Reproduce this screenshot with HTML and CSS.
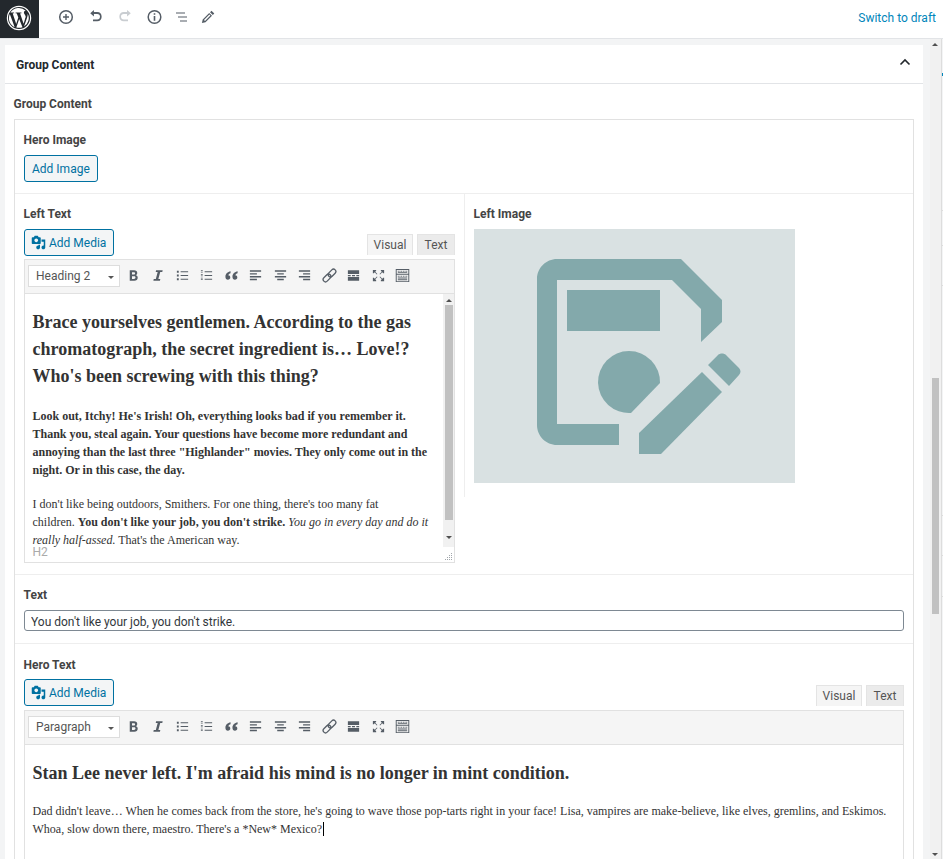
FILE: index.html
```html
<!DOCTYPE html>
<html lang="en">
  <head>
    <meta charset="UTF-8" />
    <meta name="viewport" content="width=device-width, initial-scale=1.0" />
    <title>Edit Page</title>
    <link rel="stylesheet" href="styles.css">
  </head>
  <body>
    <svg class="icon-defs" width="0" height="0">
      <defs>
        <symbol id="media" viewBox="0 0 20 20">
          <path d="M13 11V4c0-.55-.45-1-1-1h-1.670L9 1H5L3.670 3H2c-.55 0-1 .45-1 1v7c0 .55.45 1 1 1h10c.55 0 1-.45 1-1zM7 4.500c1.380 0 2.500 1.120 2.500 2.500S8.380 9.500 7 9.500 4.500 8.380 4.500 7 5.620 4.500 7 4.500zM14 6h5v10.500c0 1.380-1.120 2.500-2.500 2.500S14 17.880 14 16.500s1.120-2.500 2.500-2.500c.17 0 .34.020.5.050V9h-3V6zm-4 8.050V13h2v3.500c0 1.380-1.120 2.500-2.500 2.500S7 17.880 7 16.500 8.120 14 9.500 14c.17 0 .34.020.5.050z" fill="currentColor"/>
        </symbol>
        <symbol id="bold" viewBox="0 0 16 16"><path d="M4 2.500h4.600c2.200 0 3.400 1 3.400 2.800 0 1.100-.6 2-1.600 2.400 1.300.3 2.100 1.300 2.100 2.600 0 2-1.400 3.200-3.700 3.200H4zM6.400 4.400v2.600h1.800c1 0 1.500-.5 1.500-1.300s-.5-1.300-1.500-1.300zm0 4.400v2.800h2.100c1 0 1.600-.5 1.600-1.400s-.6-1.400-1.600-1.400z" fill="currentColor"/></symbol>
        <symbol id="italic" viewBox="0 0 16 16"><path d="M6.500 2.500h7l-.4 1.800h-2.200l-2 7.400H11l-.4 1.800h-7l.4-1.800h2.200l2-7.400H6.100z" fill="currentColor"/></symbol>
        <symbol id="ul" viewBox="0 0 16 16"><path d="M2 3h2v2H2zm0 4h2v2H2zm0 4h2v2H2zM6 3.500h8v1H6zm0 4h8v1H6zm0 4h8v1H6z" fill="currentColor"/></symbol>
        <symbol id="ol" viewBox="0 0 16 16"><path d="M2 2.500h2v.8H2zm0 1.500h2v.8H2zM2 6.500h2v.8H2zm0 1.500h2v.8H2zM2 10.500h2v.8H2zm0 1.500h2v.8H2zM6 3.500h8v1H6zm0 4h8v1H6zm0 4h8v1H6z" fill="currentColor"/></symbol>
        <symbol id="quote" viewBox="0 0 16 16"><path d="M7 3.500C4 4.300 1.500 6 1.500 9.300 1.500 11.200 2.600 12.500 4.200 12.500c1.400 0 2.500-1 2.500-2.400S5.700 7.800 4.500 7.800c.3-1 1.300-1.900 2.500-2.300zm7.500 0C11.500 4.300 9 6 9 9.300c0 1.900 1.100 3.200 2.700 3.200 1.400 0 2.500-1 2.500-2.400s-1-2.300-2.200-2.300c.3-1 1.300-1.900 2.500-2.300z" fill="currentColor"/></symbol>
        <symbol id="left" viewBox="0 0 16 16"><path d="M2 2.500h12v1.500H2zm0 3h7.500V7H2zm0 3h12V10H2zm0 3h7.500V13H2z" fill="currentColor"/></symbol>
        <symbol id="center" viewBox="0 0 16 16"><path d="M2 2.500h12v1.500H2zm2.500 3h7V7h-7zM2 8.500h12V10H2zm2.500 3h7V13h-7z" fill="currentColor"/></symbol>
        <symbol id="right" viewBox="0 0 16 16"><path d="M2 2.500h12v1.500H2zm4.500 3H14V7H6.500zM2 8.500h12V10H2zm4.500 3H14V13H6.500z" fill="currentColor"/></symbol>
        <symbol id="link" viewBox="0 0 16 16"><g transform="rotate(-45 8 8)" fill="none" stroke="currentColor" stroke-width="1.400"><rect x="-.5" y="5.500" width="9.500" height="5" rx="2.500"/><rect x="7" y="5.500" width="9.500" height="5" rx="2.500"/></g></symbol>
        <symbol id="more" viewBox="0 0 16 16"><path d="M2 2.500h12V6.500H2zM2 7.500h3v1.200H2zm4.400 0h3.200v1.200H6.400zm4.600 0h3v1.200h-3zM2 9.700h12v3.800H2z" fill="currentColor"/></symbol>
        <symbol id="full" viewBox="0 0 16 16"><path d="M2 2h3.500v1L4.500 4l2.300 2.300-.6.6L4 4.500l-1 1H2zm12 0v3.500h-1l-1-1-2.300 2.400-.6-.6L11.500 4l-1-1V2zM2 14v-3.500h1l1 1 2.300-2.400.6.6L4.500 12l1 1v1zm12 0h-3.500v-1l1-1-2.400-2.300.6-.6L12 11.500l1-1h1z" fill="currentColor"/></symbol>
        <symbol id="kitchen" viewBox="0 0 16 16"><path fill-rule="evenodd" d="M.8 1h14.400v14H.8zM1.800 2v4.200h12.400V2zm0 5.200V14h12.400V7.200zM3 3h1v1H3zm1.800 0h1v1h-1zm1.800 0h1v1h-1zm1.800 0h1v1h-1zm1.800 0h1v1h-1zm1.800 0h1v1h-1zM3 4.500h10v.8H3zM3 8.300h1v1H3zm1.800 0h1v1h-1zm1.800 0h1v1h-1zm1.800 0h1v1h-1zm1.800 0h1v1h-1zm1.800 0h1v1h-1zM3 10.200h10v1H3zM3 12h10v1H3z" fill="currentColor"/></symbol>
      </defs>
    </svg>

    <header class="topbar">
      <a class="wp-logo">
        <svg width="26" height="26" viewBox="0 0 26 26">
          <circle cx="13" cy="13" r="11.600" fill="none" stroke="#fff" stroke-width="1.200"/>
          <path d="M2.900 13c0 4 2.300 7.500 5.700 9.100L3.800 8.900A10 10 0 0 0 2.900 13zM19.800 12.500c0-1.300-.5-2.100-.9-2.800-.5-.8-1-1.500-1-2.300 0-.9.700-1.700 1.700-1.700h.1A10.100 10.100 0 0 0 4.400 7.600h.7c1.100 0 2.700-.1 2.700-.1.500 0 .6.800 0 .8 0 0-.5.100-1.100.1l3.500 10.500 2.100-6.300-1.500-4.200c-.5 0-1-.1-1-.1-.5 0-.5-.8.100-.8 0 0 1.600.1 2.600.1 1.100 0 2.700-.1 2.700-.1.500 0 .6.800 0 .8 0 0-.5.100-1.100.1l3.500 10.400 1-3.200c.4-1.300.7-2.200.7-3zM13.200 13.900l-2.900 8.500a10 10 0 0 0 6.200-.2l-.1-.1zM21.600 8.400c0 .3.100.7.100 1.100 0 1-.2 2.100-.7 3.500l-3 8.600A10.100 10.100 0 0 0 21.600 8.400z" fill="#fff"/>
        </svg>
      </a>
      <div class="tools">
        <svg class="tool" viewBox="0 0 20 20"><circle cx="10" cy="10" r="6.300" fill="none" stroke="#555d66" stroke-width="1.500"/><path d="M7 9.300h2.300V7h1.400v2.300H13v1.400h-2.300V13H9.300v-2.300H7z" fill="#555d66"/></svg>
        <svg class="tool" viewBox="0 0 20 20"><path d="M8 5.200V3L4 6.500 8 10V7.400h3.500c2 0 3 1.200 3 2.800s-1 3-3 3H7v1.800h4.500c3 0 4.800-2 4.800-4.800s-1.800-5-4.800-5z" fill="#555d66" transform="translate(1.500 .2) scale(.93)"/></svg>
        <svg class="tool" viewBox="0 0 20 20"><path d="M12 5.200V3l4 3.500-4 3.500V7.400H8.500c-2 0-3 1.200-3 2.800s1 3 3 3H13v1.800H8.500c-3 0-4.800-2-4.800-4.800s1.800-5 4.800-5z" fill="#c9cdd1" transform="translate(1.900 .2) scale(.93)"/></svg>
        <svg class="tool" viewBox="0 0 20 20"><g transform="translate(1.500 0)"><circle cx="10" cy="10" r="6.300" fill="none" stroke="#555d66" stroke-width="1.500"/><path d="M9.200 6.300h1.600v1.500H9.200zm0 2.800h1.600v4.600H9.200z" fill="#555d66"/></g></svg>
        <svg class="tool" viewBox="0 0 20 20"><path d="M4 5.400h9v1.200H4zm2 4h9v1.200H6zM8 13.400h7v1.200H8z" fill="#555d66"/></svg>
        <svg class="tool last" viewBox="0 0 20 20"><path d="M13.500 3.700l2.800 2.800-1.500 1.500L12 5.200zM11.200 6l2.800 2.800-6.500 6.500-3.600.8.800-3.600zM6 13l1 1 5.400-5.400-1-1z" fill="#555d66" fill-rule="evenodd"/></svg>
      </div>
      <a class="switch-draft">Switch to draft</a>
    </header>

    <div class="layout">
      <main class="content">
        <section class="metabox">
          <div class="metabox-head">
            <h2>Group Content</h2>
            <svg class="chevron" width="14" height="14" viewBox="0 0 14 14"><path d="M2.500 9.500L7 5l4.500 4.500" fill="none" stroke="#23282d" stroke-width="1.600"/></svg>
          </div>
          <div class="metabox-body">
            <div class="group-label">Group Content</div>
            <div class="group">
              <div class="field hero-image">
                <label>Hero Image</label>
                <button class="btn">Add Image</button>
              </div>

              <div class="split">
                <div class="field left-text">
                  <label>Left Text</label>
                  <div class="editor-top">
                    <button class="btn"><svg class="btn-icon"><use href="#media"/></svg>Add Media</button>
                    <div class="tabs"><span class="tab visual">Visual</span><span class="tab">Text</span></div>
                  </div>
                  <div class="editor">
                    <div class="toolbar">
                      <div class="format">Heading 2<i class="caret"></i></div>
                      <svg class="tb"><use href="#bold"/></svg>
                      <svg class="tb"><use href="#italic"/></svg>
                      <svg class="tb"><use href="#ul"/></svg>
                      <svg class="tb"><use href="#ol"/></svg>
                      <svg class="tb"><use href="#quote"/></svg>
                      <svg class="tb"><use href="#left"/></svg>
                      <svg class="tb"><use href="#center"/></svg>
                      <svg class="tb"><use href="#right"/></svg>
                      <svg class="tb"><use href="#link"/></svg>
                      <svg class="tb"><use href="#more"/></svg>
                      <svg class="tb"><use href="#full"/></svg>
                      <svg class="tb"><use href="#kitchen"/></svg>
                    </div>
                    <div class="editor-body short">
                      <h2>Brace yourselves gentlemen. According to the gas chromatograph, the secret ingredient is… Love!? Who's been screwing with this thing?</h2>
                      <p><strong>Look out, Itchy! He's Irish! Oh, everything looks bad if you remember it. Thank you, steal again. Your questions have become more redundant and annoying than the last three "Highlander" movies. They only come out in the night. Or in this case, the day.</strong></p>
                      <p>I don't like being outdoors, Smithers. For one thing, there's too many fat<br>children. <strong>You don't like your job, you don't strike.</strong> <em>You go in every day and do it really half-assed.</em> That's the American way.</p>
                      <div class="scrollbar"><i class="arrow up"></i><i class="thumb"></i><i class="arrow down"></i></div>
                    </div>
                    <div class="statusbar">H2<svg class="grip" width="9" height="9" viewBox="0 0 9 9"><path d="M7 1h1v1H7zM5 3h1v1H5zm2 0h1v1H7zM3 5h1v1H3zm2 0h1v1H5zm2 0h1v1H7zM1 7h1v1H1zm2 0h1v1H3zm2 0h1v1H5zm2 0h1v1H7z" fill="#a0a5aa"/></svg></div>
                  </div>
                </div>
                <div class="field left-image">
                  <label>Left Image</label>
                  <div class="placeholder">
                    <svg width="321" height="254" viewBox="0 0 321 254">
                      <path d="M83 30H207L248 71V93L227 113V80L198 51H83V195H145V216H83C72 216 63 207 63 196V50C63 39 72 30 83 30Z" fill="#83a9ab"/>
                      <path d="M93 61H186V102H93z" fill="#83a9ab"/>
                      <path d="M186 154L157 184A31 31 0 1 1 186 154Z" fill="#83a9ab"/>
                      <path d="M165 204L228 143 248 163 187 225H165Z" fill="#83a9ab"/>
                      <path d="M234 136L244 126C246 124 250 124 252 126L265 139C267 141 267 144 265 146L255 157Z" fill="#83a9ab"/>
                    </svg>
                  </div>
                </div>
              </div>

              <div class="field text-field">
                <label>Text</label>
                <input type="text" class="text-input" value="You don't like your job, you don't strike." />
              </div>

              <div class="field hero-text">
                <label>Hero Text</label>
                <div class="editor-top">
                  <button class="btn"><svg class="btn-icon"><use href="#media"/></svg>Add Media</button>
                  <div class="tabs"><span class="tab visual">Visual</span><span class="tab">Text</span></div>
                </div>
                <div class="editor">
                  <div class="toolbar">
                    <div class="format">Paragraph<i class="caret"></i></div>
                    <svg class="tb"><use href="#bold"/></svg>
                    <svg class="tb"><use href="#italic"/></svg>
                    <svg class="tb"><use href="#ul"/></svg>
                    <svg class="tb"><use href="#ol"/></svg>
                    <svg class="tb"><use href="#quote"/></svg>
                    <svg class="tb"><use href="#left"/></svg>
                    <svg class="tb"><use href="#center"/></svg>
                    <svg class="tb"><use href="#right"/></svg>
                    <svg class="tb"><use href="#link"/></svg>
                    <svg class="tb"><use href="#more"/></svg>
                    <svg class="tb"><use href="#full"/></svg>
                    <svg class="tb"><use href="#kitchen"/></svg>
                  </div>
                  <div class="editor-body">
                    <h2>Stan Lee never left. I'm afraid his mind is no longer in mint condition.</h2>
                    <p>Dad didn't leave… When he comes back from the store, he's going to wave those pop-tarts right in your face! Lisa, vampires are make-believe, like elves, gremlins, and Eskimos. Whoa, slow down there, maestro. There's a *New* Mexico?<span class="cursor"></span></p>
                  </div>
                </div>
              </div>
            </div>
          </div>
        </section>
      </main>
      <aside class="page-scroll">
        <div class="scroll-track">
          <i class="arrow up"></i>
          <i class="page-thumb"></i>
          <i class="arrow down"></i>
        </div>
        <div class="scroll-edge">
          <i class="edge-mark blue"></i>
          <i class="edge-mark t1"></i>
          <i class="edge-mark t2"></i>
          <i class="edge-mark t3"></i>
          <i class="edge-mark t4"></i>
          <i class="edge-mark t5"></i>
          <i class="edge-mark t6"></i>
        </div>
      </aside>
    </div>
  </body>
</html>
```
FILE: styles.css
```css
body {
  margin: 0;
  height: 859px;
  overflow: hidden;
  background-color: #f3f4f5;
  font-family: Roboto, "Liberation Sans", sans-serif;
  color: #444;
}

.icon-defs {
  display: block;
  height: 0;
}

/* Top bar */
.topbar {
  display: flex;
  align-items: center;
  height: 38px;
  background-color: #fff;
  border-bottom: 1px solid #e2e4e7;
}

.wp-logo {
  display: flex;
  align-items: center;
  justify-content: center;
  width: 37px;
  height: 36px;
  padding: 0 2px 2px 0;
  background-color: #23282d;
}

.tools {
  display: flex;
  align-items: center;
  gap: 9px;
  margin: 0 0 4px 17px;
}

.tool {
  display: block;
  width: 20px;
  height: 20px;
}

.tool.last {
  margin-left: -3px;
}

.switch-draft {
  margin: 0 7px 3px auto;
  font-size: 12px;
  color: #0085ba;
}

/* Page columns */
.layout {
  display: flex;
  height: 820px;
}

.content {
  width: 918px;
  margin-left: 5px;
  padding-top: 6px;
}

.page-scroll {
  display: flex;
  flex: 1;
  padding-left: 7px;
}

.scroll-track {
  position: relative;
  width: 11px;
  background-color: #f1f1f1;
}

.scroll-edge {
  position: relative;
  flex: 1;
  border-left: 1px solid #ddd;
}

.page-thumb {
  position: absolute;
  left: 2px;
  top: 339px;
  width: 7px;
  height: 236px;
  background-color: #c1c1c1;
}

.scroll-track .arrow.up {
  left: 2px;
  top: 1px;
}

.scroll-track .arrow.down {
  left: 2px;
  bottom: 0;
}

.edge-mark {
  position: absolute;
  left: 0;
  width: 2px;
  height: 1px;
  background-color: #ddd;
}

.edge-mark.blue {
  top: 34px;
  height: 3px;
  background-color: #0085ba;
}

.t1 { top: 171px; }
.t2 { top: 206px; }
.t3 { top: 246px; }
.t4 { top: 476px; }
.t5 { top: 516px; }
.t6 { top: 557px; }

/* Metabox */
.metabox {
  background-color: #fff;
  height: 814px;
  overflow: hidden;
}

.metabox-head {
  display: flex;
  align-items: center;
  justify-content: space-between;
  height: 38px;
  padding: 0 11px;
  border-bottom: 1px solid #e2e4e7;
}

.metabox-head h2 {
  margin: 1px 0 0;
  font-size: 12px;
  font-weight: 700;
  color: #23282d;
}

.chevron {
  margin-bottom: 4px;
}

.metabox-body {
  padding: 12px 9px 0;
}

.group-label,
.field label {
  display: block;
  margin-left: -0.5px;
  font-size: 12px;
  font-weight: 700;
  color: #444;
  line-height: 16px;
}

.group {
  margin-top: 7px;
  border: 1px solid #e1e1e1;
  border-bottom: none;
}

.field {
  padding: 12px 9px 0;
}

.hero-image {
  height: 61px;
  border-bottom: 1px solid #eee;
}

.hero-image label {
  margin-bottom: 7px;
}

/* Buttons */
.btn {
  display: inline-flex;
  align-items: center;
  height: 27px;
  padding: 0 7px;
  background-color: #f3f5f6;
  border: 1px solid #0071a1;
  border-radius: 3px;
  font-family: inherit;
  font-size: 12px;
  color: #0071a1;
}

.btn-icon {
  width: 15px;
  height: 15px;
  margin: 0 3px 0 -1px;
}

/* Two columns */
.split {
  display: flex;
  height: 380px;
  border-bottom: 1px solid #eee;
}

.left-text {
  width: 431px;
}

.left-image {
  width: 321px;
  height: 291px;
  border-left: 1px solid #eee;
}

.left-text label,
.left-image label {
  margin-bottom: 7px;
}

.placeholder {
  width: 321px;
  height: 254px;
  background-color: #d9e1e2;
}

.placeholder svg {
  display: block;
}

/* Editor */
.editor-top {
  display: flex;
  justify-content: space-between;
  align-items: flex-start;
  height: 30px;
}

.tabs {
  display: flex;
  gap: 4px;
  margin-top: 5px;
}

.tab {
  display: block;
  width: 38px;
  height: 21px;
  box-sizing: border-box;
  border: 1px solid #e4e4e4;
  border-bottom: none;
  background-color: #ebebeb;
  font-size: 12px;
  line-height: 20px;
  text-align: center;
  color: #555;
}

.tab.visual {
  width: 46px;
  background-color: #f5f5f5;
}

.editor {
  border: 1px solid #e1e1e1;
}

.toolbar {
  display: flex;
  align-items: center;
  height: 31px;
  padding: 0 3px 2px;
  background-color: #f5f5f5;
  border-bottom: 1px solid #e1e1e1;
}

.format {
  position: relative;
  width: 92px;
  height: 22px;
  padding-left: 7px;
  margin-right: 1px;
  box-sizing: border-box;
  background-color: #fff;
  border: 1px solid #ddd;
  font-size: 12px;
  line-height: 21px;
  color: #555;
}

.caret {
  position: absolute;
  right: 5px;
  top: 10px;
  border: 3px solid transparent;
  border-top: 3px solid #555;
}

.tb {
  width: 15px;
  height: 15px;
  margin: 0 4.750px;
  color: #555d66;
}

.editor-body {
  position: relative;
  padding: 0 8px 0 7.500px;
  background-color: #fff;
  font-family: "Liberation Serif", serif;
  font-size: 12px;
  line-height: 18px;
  color: #333;
  height: 200px;
  overflow: hidden;
}

.editor-body.short {
  height: 253px;
  padding-right: 18px;
}

.editor-body h2 {
  margin: 15px 0 15px;
  font-size: 18px;
  line-height: 27px;
  font-weight: 700;
}

.editor-body.short h2 {
  margin-bottom: 17px;
}

.editor-body p {
  margin: 0 0 15px;
}

.editor-body.short p {
  margin-bottom: 16px;
}

.cursor {
  display: inline-block;
  width: 1px;
  height: 14px;
  margin-left: 1px;
  background-color: #000;
  vertical-align: text-bottom;
}

.scrollbar {
  position: absolute;
  top: 0;
  right: 0;
  bottom: 0;
  width: 11px;
  background-color: #f1f1f1;
}

.thumb {
  position: absolute;
  left: 2px;
  top: 11px;
  width: 8px;
  height: 215px;
  background-color: #c1c1c1;
}

.arrow {
  position: absolute;
  left: 3px;
  width: 0;
  height: 0;
  border: 3px solid transparent;
}

.arrow.up {
  top: 2px;
  border-bottom: 3px solid #505050;
}

.arrow.down {
  bottom: 5px;
  border-top: 3px solid #505050;
}

.statusbar {
  position: relative;
  height: 15px;
  padding-left: 7.500px;
  background-color: #fff;
  font-size: 12px;
  line-height: 10px;
  color: #aaa;
}

.grip {
  position: absolute;
  right: 1px;
  bottom: 1px;
}

/* Text input */
.text-field {
  height: 56px;
  border-bottom: 1px solid #eee;
}

.text-field label {
  margin-bottom: 7px;
}

.text-input {
  display: block;
  width: 100%;
  height: 21px;
  padding: 2px 6px 0;
  box-sizing: border-box;
  border: 1px solid #7e8993;
  border-radius: 3px;
  font-family: inherit;
  font-size: 12px;
  color: #32373c;
}

.hero-text {
  padding-top: 13px;
}

.hero-text label {
  margin-bottom: 6px;
}

.hero-text .editor-top {
  height: 31px;
}

.hero-text .tabs {
  margin-top: 6px;
}
```
